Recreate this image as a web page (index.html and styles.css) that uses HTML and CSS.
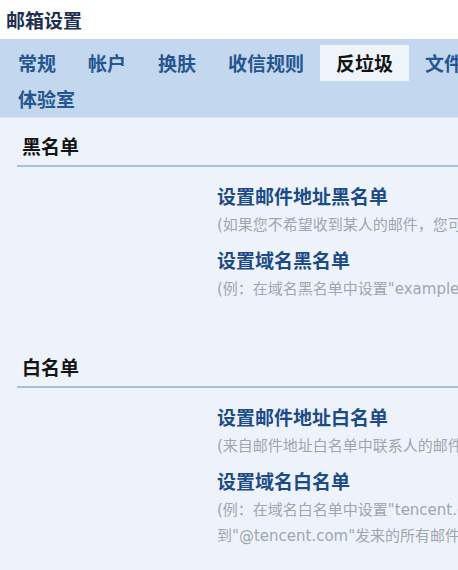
FILE: index.html
```html
<!DOCTYPE html>
<html lang="zh-CN">
<head>
<meta charset="utf-8">
<title>邮箱设置</title>
<link rel="stylesheet" href="styles.css">
</head>
<body>
<div class="page">
  <h1 class="title">邮箱设置</h1>
  <nav class="tabs">
    <a class="tab">常规</a>
    <a class="tab">帐户</a>
    <a class="tab">换肤</a>
    <a class="tab">收信规则</a>
    <a class="tab active">反垃圾</a>
    <a class="tab">文件夹和标签</a>
    <a class="tab">体验室</a>
  </nav>
  <main class="content">
    <section class="section">
      <h2 class="section-head">黑名单</h2>
      <div class="items">
        <a class="link">设置邮件地址黑名单</a>
        <p class="desc">(如果您不希望收到某人的邮件，您可以把他的邮件地址加入黑名单)</p>
        <a class="link">设置域名黑名单</a>
        <p class="desc">(例：在域名黑名单中设置"example.com"，您将不会收到来自该域名的邮件)</p>
      </div>
    </section>
    <section class="section">
      <h2 class="section-head">白名单</h2>
      <div class="items">
        <a class="link">设置邮件地址白名单</a>
        <p class="desc">(来自邮件地址白名单中联系人的邮件，将不会被当作垃圾邮件)</p>
        <a class="link">设置域名白名单</a>
        <p class="desc">(例：在域名白名单中设置"tencent.com"，您将会收<br>到"@tencent.com"发来的所有邮件)</p>
      </div>
    </section>
  </main>
</div>
</body>
</html>
```
FILE: styles.css
```css
html, body {
  margin: 0;
  padding: 0;
  overflow: hidden;
  background: #eef3fb;
}
.page {
  width: 640px;
  height: 570px;
  font-family: "Noto Sans CJK SC", sans-serif;
  background: #eef3fb;
}
.title {
  margin: 0;
  height: 39px;
  line-height: 39px;
  padding-left: 6px;
  font-size: 19px;
  font-weight: bold;
  color: #1e2f50;
  background: #ffffff;
}
.tabs {
  display: flex;
  flex-wrap: wrap;
  padding: 6px 0 0 2px;
  background: #c3d7ef;
  border-bottom: 1px solid #d6e3f3;
}
.tab {
  display: block;
  height: 36px;
  line-height: 36px;
  padding: 0 16px;
  font-size: 19px;
  font-weight: bold;
  color: #25568f;
  white-space: nowrap;
}
.tab.active {
  background: #eff4fb;
  color: #141414;
}
.content {
  display: flex;
  flex-direction: column;
}
.section {
  padding-bottom: 37px;
}
.section-head {
  margin: 0 0 0 17px;
  padding: 14px 0 5px 5px;
  line-height: 28px;
  font-size: 19px;
  font-weight: bold;
  color: #151515;
  border-bottom: 2px solid #a8c1dc;
}
.items {
  display: flex;
  flex-direction: column;
  align-items: flex-start;
  padding: 13px 0 0 217px;
}
.link {
  display: block;
  line-height: 32px;
  font-size: 19px;
  font-weight: bold;
  color: #1d4b87;
  white-space: nowrap;
}
.desc {
  margin: 0 0 6px;
  line-height: 26px;
  font-size: 15px;
  font-family: "DejaVu Sans", "Noto Sans CJK SC", sans-serif;
  color: #9ea6b0;
  white-space: nowrap;
}
.desc:last-child {
  margin-bottom: 0;
}
```
